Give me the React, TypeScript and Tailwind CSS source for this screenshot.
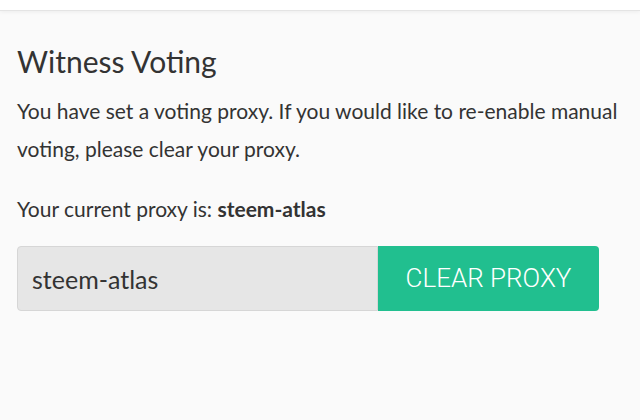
export default function App() {
  return (
    <div className="h-[420px] w-[640px] overflow-hidden bg-[#fafafa] font-['Lato',sans-serif] text-[#333]">
      <div className="h-[11px] border-b border-[#e4e4e4] bg-white shadow-[0_1px_4px_rgba(0,0,0,0.06)]" />
      <div className="px-[17px] pt-[30px]">
        <h1 className="text-[30px] leading-[40px] text-[#333]">Witness Voting</h1>
        <p className="mt-[11px] text-[21px] leading-[38px]">
          You have set a voting proxy. If you would like to re-enable manual voting, please clear your proxy.
        </p>
        <p className="mt-[22px] text-[21px] leading-[38px]">
          Your current proxy is: <span className="font-bold">steem-atlas</span>
        </p>
        <div className="mt-[18px] flex h-[65px] w-[582px]">
          <input
            readOnly
            value="steem-atlas"
            className="h-full w-[361px] rounded-l-[4px] border border-[#d6d6d6] bg-[#e6e6e6] px-[14px] text-[25px] text-[#333] outline-none"
          />
          <button className="h-full flex-1 rounded-r-[4px] bg-[#21bf8f] font-['Roboto',sans-serif] text-[26px] font-light text-white">
            CLEAR PROXY
          </button>
        </div>
      </div>
    </div>
  );
}
